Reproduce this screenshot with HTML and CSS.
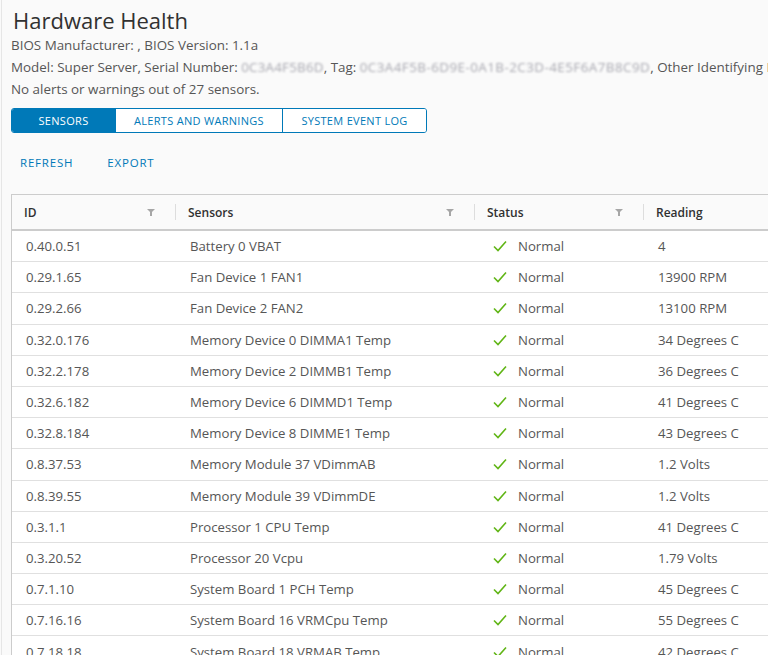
FILE: index.html
```html
<!DOCTYPE html>
<html>
<head>
<meta charset="utf-8">
<link rel="stylesheet" href="styles.css">
</head>
<body>
<div class="page">
  <h1 class="title">Hardware Health</h1>
  <div class="info">BIOS Manufacturer: , BIOS Version: 1.1a</div>
  <div class="info nowrap">Model: Super Server, Serial Number: <span class="blur serial">0C3A4F5B6D</span>, Tag: <span class="blur tag">0C3A4F5B-6D9E-0A1B-2C3D-4E5F6A7B8C9D</span>, Other Identifying Info</div>
  <div class="info">No alerts or warnings out of 27 sensors.</div>

  <div class="tabs">
    <button class="tab active">SENSORS</button>
    <button class="tab">ALERTS AND WARNINGS</button>
    <button class="tab">SYSTEM EVENT LOG</button>
  </div>

  <div class="actions">
    <button class="link-btn">REFRESH</button>
    <button class="link-btn">EXPORT</button>
  </div>

  <div class="grid">
    <div class="row head">
      <div class="cell c1">ID<span class="filter"></span><span class="sep"></span></div>
      <div class="cell c2">Sensors<span class="filter"></span><span class="sep"></span></div>
      <div class="cell c3">Status<span class="filter"></span><span class="sep"></span></div>
      <div class="cell c4">Reading</div>
    </div>
    <div id="rows"></div>
  </div>
</div>
<script>
var data = [
["0.40.0.51","Battery 0 VBAT","4"],
["0.29.1.65","Fan Device 1 FAN1","13900 RPM"],
["0.29.2.66","Fan Device 2 FAN2","13100 RPM"],
["0.32.0.176","Memory Device 0 DIMMA1 Temp","34 Degrees C"],
["0.32.2.178","Memory Device 2 DIMMB1 Temp","36 Degrees C"],
["0.32.6.182","Memory Device 6 DIMMD1 Temp","41 Degrees C"],
["0.32.8.184","Memory Device 8 DIMME1 Temp","43 Degrees C"],
["0.8.37.53","Memory Module 37 VDimmAB","1.2 Volts"],
["0.8.39.55","Memory Module 39 VDimmDE","1.2 Volts"],
["0.3.1.1","Processor 1 CPU Temp","41 Degrees C"],
["0.3.20.52","Processor 20 Vcpu","1.79 Volts"],
["0.7.1.10","System Board 1 PCH Temp","45 Degrees C"],
["0.7.16.16","System Board 16 VRMCpu Temp","55 Degrees C"],
["0.7.18.18","System Board 18 VRMAB Temp","42 Degrees C"]
];
var check = '<svg class="check" width="16" height="16" viewBox="0 0 16 16"><path d="M2 8.5 L6 12.5 L14 3.5" fill="none" stroke="#60b515" stroke-width="1.6"/></svg>';
var html = '';
data.forEach(function(r){
  html += '<div class="row body"><div class="cell c1">'+r[0]+'</div><div class="cell c2">'+r[1]+'</div><div class="cell c3">'+check+'<span>Normal</span></div><div class="cell c4">'+r[2]+'</div></div>';
});
document.getElementById('rows').innerHTML = html;
</script>
</body>
</html>
```

FILE: styles.css
```css
html, body {
  margin: 0;
  padding: 0;
  background: #fafafa;
  overflow: hidden;
}
body {
  font-family: "Open Sans", "Noto Sans", sans-serif;
  color: #565656;
  border-left: 1px solid #e6e6e6;
  margin-left: 1px;
  height: 655px;
}
.page {
  padding: 6px 0 0 9px;
}
.title {
  margin: 0;
  font-size: 22px;
  font-weight: 400;
  line-height: 28px;
  color: #313131;
  padding-left: 2px;
}
.info {
  font-size: 13.4px;
  line-height: 22px;
  color: #565656;
}
.nowrap {
  white-space: nowrap;
}
.blur {
  color: #a8a8b0;
  filter: blur(0.9px);
}
.serial { letter-spacing: 0.2px; }
.tag { letter-spacing: 0.45px; }
.tabs {
  display: inline-flex;
  margin-top: 8px;
  border: 1px solid #0079b8;
  border-radius: 3px;
  overflow: hidden;
  height: 25px;
  box-sizing: border-box;
}
.tab {
  font-family: inherit;
  font-size: 11px;
  letter-spacing: 0.3px;
  color: #0079b8;
  background: #fff;
  border: none;
  border-left: 1px solid #0079b8;
  padding: 0;
  height: 23px;
  cursor: pointer;
}
.tab:nth-child(1) { width: 103px; border-left: none; }
.tab:nth-child(2) { width: 167px; }
.tab:nth-child(3) { width: 144px; }
.tab.active {
  background: #0079b8;
  color: #fff;
}
.actions {
  display: flex;
  gap: 16px;
  height: 36px;
  align-items: center;
  margin-top: 11px;
  margin-bottom: 14px;
}
.link-btn {
  font-family: inherit;
  font-size: 11.5px;
  letter-spacing: 0.8px;
  color: #0079b8;
  background: none;
  border: none;
  padding: 0 9px;
  cursor: pointer;
}
.grid {
  width: 900px;
  background: #fff;
  border: 1px solid #ccc;
  border-right: none;
}
.row {
  display: flex;
}
.row.head {
  height: 34px;
  background: #fafafa;
  border-bottom: 2px solid #ccc;
  font-size: 12px;
  font-weight: 600;
  color: #313131;
}
.row.body {
  height: 30.2px;
  border-bottom: 1px solid #e0e0e0;
  font-size: 13.2px;
  color: #565656;
}
.cell {
  position: relative;
  display: flex;
  align-items: center;
  box-sizing: border-box;
}
.c1 { width: 164px; }
.c2 { width: 299px; }
.c3 { width: 169px; }
.c4 { flex: 1; }
.head .cell { padding-left: 12px; }
.body .cell { padding-left: 14px; }
.body .c3 { padding-left: 17px; }
.check { margin-right: 10px; flex: none; }
.filter {
  position: absolute;
  right: 21px;
  top: 14px;
  width: 0;
  height: 0;
  border-left: 4px solid transparent;
  border-right: 4px solid transparent;
  border-top: 4px solid #a6a6a6;
}
.filter::after {
  content: "";
  position: absolute;
  left: -1px;
  top: -1px;
  width: 2px;
  height: 4px;
  background: #a6a6a6;
}
.sep {
  position: absolute;
  right: 0;
  top: 9px;
  bottom: 9px;
  width: 1px;
  background: #ddd;
}
```
